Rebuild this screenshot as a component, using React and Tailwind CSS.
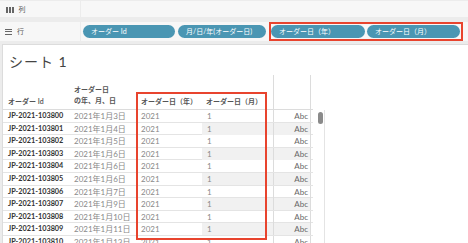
const ROWS = [
  ['JP-2021-103800', '2021年1月3日'],
  ['JP-2021-103801', '2021年1月4日'],
  ['JP-2021-103802', '2021年1月5日'],
  ['JP-2021-103803', '2021年1月6日'],
  ['JP-2021-103804', '2021年1月6日'],
  ['JP-2021-103805', '2021年1月6日'],
  ['JP-2021-103806', '2021年1月7日'],
  ['JP-2021-103807', '2021年1月9日'],
  ['JP-2021-103808', '2021年1月10日'],
  ['JP-2021-103809', '2021年1月11日'],
  ['JP-2021-103810', '2021年1月13日'],
]

const FONT = "font-['Lato','Noto_Sans_CJK_JP',sans-serif]"

function Pill({ label, width }) {
  return (
    <div
      className={`h-[13px] rounded-full bg-[#4a96b3] text-white text-[7px] leading-[13px] pl-[8px] whitespace-nowrap ${width}`}
    >
      {label}
    </div>
  )
}

export default function App() {
  return (
    <div className={`w-[468px] h-[243px] overflow-hidden bg-[#ececec] ${FONT}`}>
      {/* 列 shelf */}
      <div className="flex h-[17px] gap-px pt-px">
        <div className="w-[80px] bg-[#f7f7f7] flex items-center pl-[6px] gap-[5px] text-[7px] text-[#555]">
          <span className="flex gap-[1.5px] items-end h-[7px]">
            <span className="w-[1.5px] h-[6px] bg-[#666]" />
            <span className="w-[1.5px] h-[6px] bg-[#666]" />
            <span className="w-[1.5px] h-[6px] bg-[#666]" />
          </span>
          列
        </div>
        <div className="flex-1 bg-[#f7f7f7]" />
      </div>

      {/* 行 shelf */}
      <div className="flex h-[19px] gap-px mt-[5px]">
        <div className="w-[80px] bg-[#f7f7f7] flex items-center pl-[5px] gap-[5px] text-[7px] text-[#555]">
          <span className="flex flex-col gap-[1.5px] w-[7px]">
            <span className="h-[1px] bg-[#666]" />
            <span className="h-[1px] bg-[#666]" />
            <span className="h-[1px] bg-[#666]" />
          </span>
          行
        </div>
        <div className="flex-1 bg-[#f7f7f7] flex items-center pl-[2px] gap-[3px] relative">
          <Pill label="オーダー Id" width="w-[92px]" />
          <Pill label="月/日/年(オーダー日)" width="w-[88px]" />
          <Pill label="オーダー日（年）" width="w-[94px] ml-[2px]" />
          <Pill label="オーダー日（月）" width="w-[93px] -ml-[1px]" />
          <div className="absolute left-[188px] top-0 w-[194px] h-[19px] border-2 border-[#e8442e]" />
        </div>
      </div>

      {/* sheet */}
      <div className="relative mt-[3px] ml-[2px] h-[201px] bg-white border-l border-t border-[#dcdcdc] overflow-hidden">
        <div className="pl-[6px] pt-[6px] h-[30px] text-[14px] text-[#444] tracking-[1px]">
          シート 1
        </div>

        <div className="flex">
          <div className="w-[310px]">
            {/* header */}
            <div className="grid grid-cols-[69px_65px_65px_71px_38px] h-[35px] border-b border-[#dcdcdc] text-[7px] text-[#555] font-semibold">
              <div className="flex items-end pl-[5px] pb-[3px]">オーダー Id</div>
              <div className="flex flex-col justify-end pl-[2px] pb-[3px] leading-[11px]">
                <span>オーダー日</span>
                <span>の年、月、日</span>
              </div>
              <div className="flex items-end pl-[4px] pb-[3px]">オーダー日（年）</div>
              <div className="flex items-end pl-[4px] pb-[3px]">オーダー日（月）</div>
              <div className="border-l border-r border-[#dcdcdc]" />
            </div>
            {/* rows */}
            {ROWS.map(([id, date], i) => (
              <div
                key={id}
                className="grid grid-cols-[69px_65px_65px_71px_38px] h-[12.6px] border-b border-[#e4e4e4] text-[8px] leading-[12px]"
              >
                <div className="pl-[5px] text-[#333] font-bold text-[7.3px] whitespace-nowrap">{id}</div>
                <div className="pl-[2px] text-[#888] whitespace-nowrap">{date}</div>
                <div className="pl-[4px] text-[#888]">2021</div>
                <div className={`pl-[5px] text-[#888] ${i % 2 ? 'bg-[#f1f1f1]' : ''}`}>1</div>
                <div
                  className={`border-l border-r border-[#dcdcdc] text-right pr-[2px] text-[#666] ${i % 2 ? 'bg-[#f1f1f1]' : ''}`}
                >
                  Abc
                </div>
              </div>
            ))}
          </div>
          {/* scrollbar */}
          <div className="ml-[3px] mt-[35px] w-[9px] h-[200px] border-r border-[#e4e4e4] pt-[2px] pl-[2px]">
            <div className="w-[5px] h-[12px] rounded-full bg-[#8a8a8a]" />
          </div>
        </div>

        {/* highlight */}
        <div className="absolute left-[133px] top-[47px] w-[131px] h-[148px] border-2 border-[#e8442e]" />
      </div>
    </div>
  )
}
